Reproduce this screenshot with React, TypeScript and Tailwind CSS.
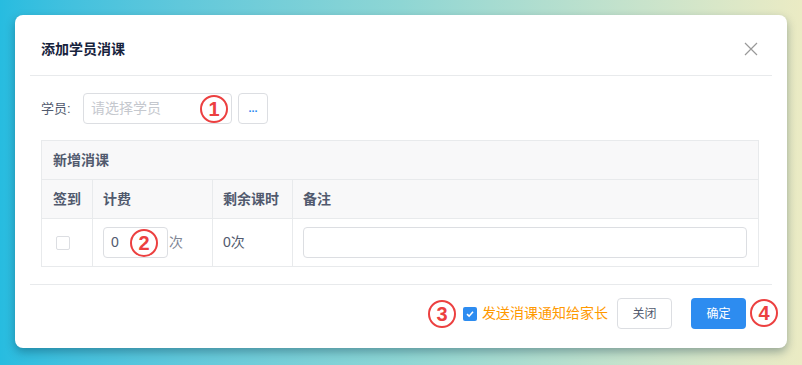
import React from "react";

function Mark({ n, className = "" }: { n: string; className?: string }) {
  return (
    <span
      className={`flex h-[28px] w-[28px] items-center justify-center rounded-full border-2 border-[#ec4040] text-[20px] font-bold leading-none text-[#ec4040] ${className}`}
    >
      {n}
    </span>
  );
}

function CloseIcon() {
  return (
    <svg width="14" height="14" viewBox="0 0 14 14" fill="none">
      <path d="M1 1L13 13M13 1L1 13" stroke="#999" strokeWidth="1.2" />
    </svg>
  );
}

export default function App() {
  return (
    <div className="h-[365px] w-full bg-gradient-to-r from-[#27bce0] via-[#8ed6d4] to-[#ebebc4] pl-[15px] pt-[15px] font-['Liberation_Sans','Noto_Sans_CJK_SC',sans-serif] text-[#515a6e]">
      <div className="flex h-[333px] w-[772px] flex-col rounded-[8px] bg-white px-[15px] shadow-[0_4px_10px_rgba(0,40,60,0.35)]">
        {/* header */}
        <div className="flex h-[61px] shrink-0 items-center justify-between border-b border-[#e8eaec] pl-[11px] pr-[14px] pt-[8px]">
          <div className="text-[14px] font-bold text-[#17233d]">添加学员消课</div>
          <CloseIcon />
        </div>

        {/* body */}
        <div className="pl-[11px] pr-[13px] pt-[17px]">
          <div className="flex h-[31px] items-center">
            <span className="w-[42px] text-[13px]">学员:</span>
            <div className="relative flex h-[31px] w-[149px] items-center rounded-[4px] border border-[#dcdee2] pl-[7px] text-[14px] text-[#c5c8ce]">
              请选择学员
              <Mark n="1" className="absolute right-[3px] top-[1px] bg-white" />
            </div>
            <div className="ml-[6px] flex h-[31px] w-[30px] items-end justify-center rounded-[4px] border border-[#dcdee2] pb-[9px] text-[11px] font-bold leading-none text-[#2d8cf0]">
              ...
            </div>
          </div>

          <div className="mt-[16px] border border-[#e8eaec] text-[14px]">
            <div className="flex h-[38px] items-center bg-[#f8f8f9] px-[11px] font-bold">新增消课</div>
            <div className="flex h-[39px] border-t border-[#e8eaec] bg-[#f8f8f9] font-bold">
              <div className="flex w-[50px] items-center px-[11px]">签到</div>
              <div className="flex w-[120px] items-center border-l border-[#e8eaec] px-[10px]">计费</div>
              <div className="flex w-[80px] items-center border-l border-[#e8eaec] px-[10px]">剩余课时</div>
              <div className="flex flex-1 items-center border-l border-[#e8eaec] px-[10px]">备注</div>
            </div>
            <div className="flex h-[48px] border-t border-[#e8eaec]">
              <div className="flex w-[50px] items-center px-[14px]">
                <span className="h-[14px] w-[14px] rounded-[2px] border border-[#dcdee2]" />
              </div>
              <div className="flex w-[120px] items-center border-l border-[#e8eaec] px-[10px]">
                <div className="relative flex h-[31px] w-[65px] items-center rounded-[4px] border border-[#dcdee2] pl-[7px]">
                  0
                  <Mark n="2" className="absolute left-[26px] top-[1px] bg-white" />
                </div>
                <span className="ml-[1px] text-[#808695]">次</span>
              </div>
              <div className="flex w-[80px] items-center border-l border-[#e8eaec] px-[10px]">0次</div>
              <div className="flex flex-1 items-center border-l border-[#e8eaec] pl-[10px] pr-[11px]">
                <div className="h-[31px] w-full rounded-[4px] border border-[#dcdee2]" />
              </div>
            </div>
          </div>
        </div>

        {/* footer */}
        <div className="relative mt-[17px] flex h-[45px] items-end justify-end border-t border-[#e8eaec] pr-[26px]">
          <div className="flex h-[31px] items-center">
            <Mark n="3" />
            <span className="ml-[7px] flex h-[14px] w-[14px] items-center justify-center rounded-[2px] bg-[#2d8cf0]">
              <svg width="10" height="10" viewBox="0 0 10 10" fill="none">
                <path d="M2 5.2L4.1 7.2L8 2.8" stroke="#fff" strokeWidth="1.6" />
              </svg>
            </span>
            <span className="ml-[5px] text-[14px] text-[#ff9900]">发送消课通知给家长</span>
            <button className="ml-[9px] h-[31px] w-[55px] rounded-[4px] border border-[#dcdee2] bg-white text-[12px] text-[#515a6e]">
              关闭
            </button>
            <button className="ml-[19px] h-[31px] w-[55px] rounded-[4px] bg-[#2d8cf0] text-[12px] text-white">
              确定
            </button>
          </div>
          <Mark n="4" className="absolute -right-[6px] bottom-[2px]" />
        </div>
      </div>
    </div>
  );
}
